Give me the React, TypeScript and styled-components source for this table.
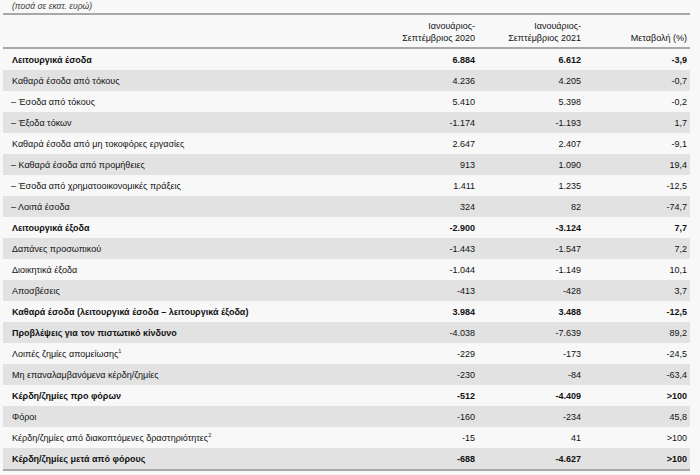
import React from "react";
import styled, { createGlobalStyle } from "styled-components";

const Global = createGlobalStyle`
  html, body { margin: 0; padding: 0; background: #f8f8f8; }
  body { font-family: "Liberation Sans", Arial, sans-serif; color: #111; }
`;

const Page = styled.div`
  width: 700px;
  height: 475px;
  padding: 0 10px 0 3px;
  box-sizing: border-box;
  overflow: hidden;
`;

const Caption = styled.div`
  height: 13px;
  padding-left: 9px;
  font-size: 8.5px;
  font-style: italic;
  line-height: 13px;
  color: #3a3a3a;
  border-bottom: 2px solid #a8a8a8;
`;

const Grid = styled.div`
  display: grid;
  grid-template-columns: 1fr 106px 106px 106px;
`;

const Head = styled(Grid)`
  height: 32px;
  align-items: end;
  border-bottom: 2px solid #a8a8a8;
`;

const HeadCell = styled.div`
  text-align: right;
  font-size: 9px;
  line-height: 11.5px;
  padding: 0 3px 3px 0;
  color: #111;
`;

const Row = styled(Grid)<{ $shade: boolean; $bold: boolean }>`
  height: 21px;
  align-items: center;
  background: ${(p) => (p.$shade ? "#e2e2e2" : "#f8f8f8")};
  font-size: 9px;
  font-weight: ${(p) => (p.$bold ? 700 : 400)};
`;

const Label = styled.div<{ $sub: boolean; $bold: boolean }>`
  padding-left: ${(p) => (p.$sub ? "8px" : "9px")};
  font-weight: ${(p) => (p.$bold ? 700 : "inherit")};
  white-space: nowrap;
`;

const Num = styled.div`
  text-align: right;
  padding-right: 3px;
`;

const Sup = styled.sup`
  font-size: 5.5px;
  vertical-align: 4px;
  line-height: 0;
`;

const Foot = styled.div`
  border-top: 2px solid #a8a8a8;
`;

type R = { l: string; a: string; b: string; c: string; bold?: boolean; lbold?: boolean; sub?: boolean; sup?: string };

const rows: R[] = [
  { l: "Λειτουργικά έσοδα", a: "6.884", b: "6.612", c: "-3,9", bold: true },
  { l: "Καθαρά έσοδα από τόκους", a: "4.236", b: "4.205", c: "-0,7" },
  { l: "Έσοδα από τόκους", a: "5.410", b: "5.398", c: "-0,2", sub: true },
  { l: "Έξοδα τόκων", a: "-1.174", b: "-1.193", c: "1,7", sub: true },
  { l: "Καθαρά έσοδα από μη τοκοφόρες εργασίες", a: "2.647", b: "2.407", c: "-9,1" },
  { l: "Καθαρά έσοδα από προμήθειες", a: "913", b: "1.090", c: "19,4", sub: true },
  { l: "Έσοδα από χρηματοοικονομικές πράξεις", a: "1.411", b: "1.235", c: "-12,5", sub: true },
  { l: "Λοιπά έσοδα", a: "324", b: "82", c: "-74,7", sub: true },
  { l: "Λειτουργικά έξοδα", a: "-2.900", b: "-3.124", c: "7,7", bold: true },
  { l: "Δαπάνες προσωπικού", a: "-1.443", b: "-1.547", c: "7,2" },
  { l: "Διοικητικά έξοδα", a: "-1.044", b: "-1.149", c: "10,1" },
  { l: "Αποσβέσεις", a: "-413", b: "-428", c: "3,7" },
  { l: "Καθαρά έσοδα (λειτουργικά έσοδα – λειτουργικά έξοδα)", a: "3.984", b: "3.488", c: "-12,5", bold: true },
  { l: "Προβλέψεις για τον πιστωτικό κίνδυνο", a: "-4.038", b: "-7.639", c: "89,2", lbold: true },
  { l: "Λοιπές ζημίες απομείωσης", a: "-229", b: "-173", c: "-24,5", sup: "1" },
  { l: "Μη επαναλαμβανόμενα κέρδη/ζημίες", a: "-230", b: "-84", c: "-63,4" },
  { l: "Κέρδη/ζημίες προ φόρων", a: "-512", b: "-4.409", c: ">100", bold: true },
  { l: "Φόροι", a: "-160", b: "-234", c: "45,8" },
  { l: "Κέρδη/ζημίες από διακοπτόμενες δραστηριότητες", a: "-15", b: "41", c: ">100", sup: "2" },
  { l: "Κέρδη/ζημίες μετά από φόρους", a: "-688", b: "-4.627", c: ">100", bold: true },
];

export default function App() {
  return (
    <Page>
      <Global />
      <Caption>(ποσά σε εκατ. ευρώ)</Caption>
      <Head>
        <div />
        <HeadCell>Ιανουάριος-<br />Σεπτέμβριος 2020</HeadCell>
        <HeadCell>Ιανουάριος-<br />Σεπτέμβριος 2021</HeadCell>
        <HeadCell>Μεταβολή (%)</HeadCell>
      </Head>
      {rows.map((r, i) => (
        <Row key={i} $shade={i % 2 === 1} $bold={!!r.bold}>
          <Label $sub={!!r.sub} $bold={!!r.lbold}>
            {r.sub ? "– " : ""}
            {r.l}
            {r.sup ? <Sup>{r.sup}</Sup> : null}
          </Label>
          <Num>{r.a}</Num>
          <Num>{r.b}</Num>
          <Num>{r.c}</Num>
        </Row>
      ))}
      <Foot />
    </Page>
  );
}
